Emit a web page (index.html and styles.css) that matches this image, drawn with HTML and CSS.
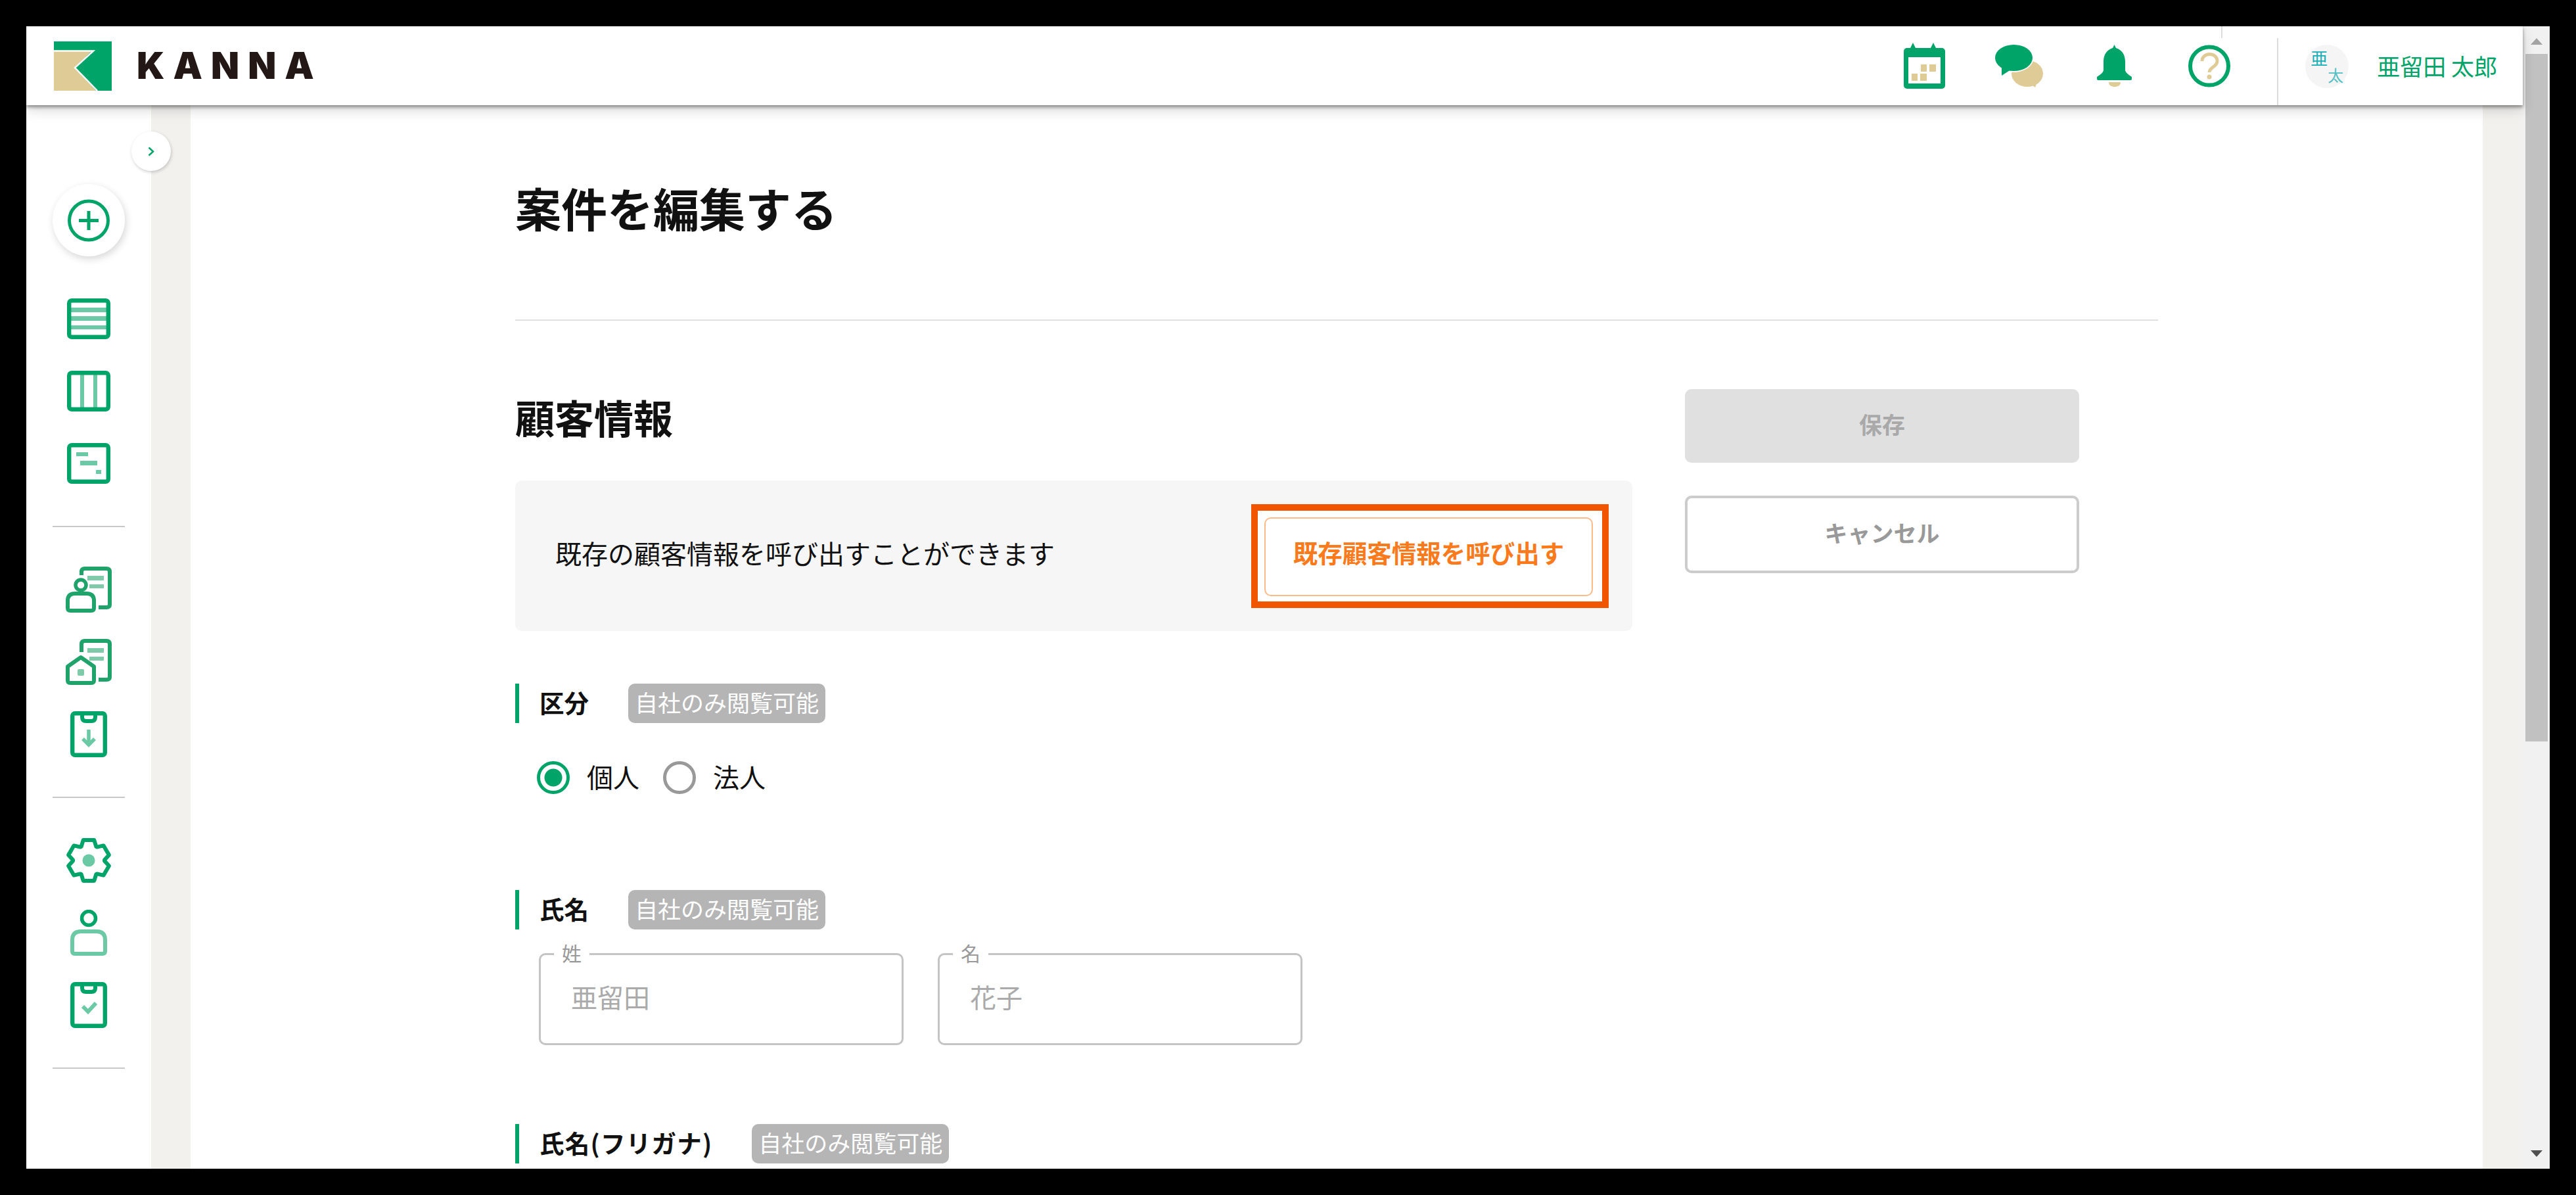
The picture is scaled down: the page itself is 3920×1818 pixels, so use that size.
FILE: index.html
```html
<!DOCTYPE html>
<html lang="ja">

<head>
    <title>KANNA - 案件を編集する</title>
    <link rel="stylesheet" href="styles.css">
</head>

<body>
    <div class="window">
        <div class="viewport">
            <header class="topbar">
                <span class="topbar-tick"></span>
                <div class="brand">
                    <svg class="brand-mark" viewBox="0 0 88 75">
                        <rect width="88" height="75" fill="#00a468" />
                        <path d="M0 15H57L31 40L64 75H0Z" fill="#dfcb96" />
                        <path d="M0 14.5H60L32 40L66 75" fill="none" stroke="#fff" stroke-width="2.5" />
                    </svg>
                    <span class="brand-name">KANNA</span>
                </div>
                <div class="topbar-right">
                    <a class="top-icon">
                        <svg width="63" height="70" viewBox="0 0 63 70">
                            <path d="M14 0L18 8H10ZM45 0L49 8H41Z" fill="#00a468" />
                            <rect y="8" width="63" height="62" rx="5" fill="#00a468" />
                            <rect x="7" y="22" width="49" height="40" fill="#fff" />
                            <path d="M26 33h9v11h-9zM39 33h10v11H39zM12 47h9v11h-9zM25 47h10v11H25z" fill="#dfcb96" />
                        </svg>
                    </a>
                    <a class="top-icon">
                        <svg width="73" height="65" viewBox="0 0 73 65">
                            <ellipse cx="49" cy="44" rx="24" ry="20" fill="#dfcb96" />
                            <path d="M52 58L61 65L66 52Z" fill="#dfcb96" />
                            <ellipse cx="28.5" cy="20" rx="30" ry="22" fill="#fff" />
                            <ellipse cx="28.5" cy="20" rx="28.5" ry="20" fill="#00a468" />
                            <path d="M10 33V47L24 38Z" fill="#00a468" />
                        </svg>
                    </a>
                    <a class="top-icon">
                        <svg width="53" height="64" viewBox="0 0 53 64">
                            <path d="M26.5 0L29 5C38 8 43 15 43 26V38C43 42 47 45 53 49V52Q53 54 50 54H3Q0 54 0 52V49C6 45 10 42 10 38V26C10 15 15 8 24 5Z" fill="#00a468" />
                            <path d="M18 57H36C36 62 32 64 27 64C22 64 18 62 18 57Z" fill="#dfcb96" />
                        </svg>
                    </a>
                    <a class="top-icon">
                        <svg width="64" height="65" viewBox="0 0 64 65">
                            <circle cx="32" cy="32.5" r="29" fill="none" stroke="#00a468" stroke-width="6" />
                            <path d="M21 25C21 11 44 11 44 25C44 34 32 34 32 42" fill="none" stroke="#dfcb96" stroke-width="5" />
                            <circle cx="32" cy="49" r="3.5" fill="#dfcb96" />
                        </svg>
                    </a>
                    <div class="account">
                        <div class="avatar">
                            <span class="avatar-sei">亜</span>
                            <span class="avatar-mei">太</span>
                        </div>
                        <span class="account-name">亜留田 太郎</span>
                    </div>
                </div>
            </header>

            <div class="app-body">
                <aside class="sidebar">
                    <button class="new-btn">
                        <svg width="64" height="65" viewBox="0 0 64 65">
                            <circle cx="32" cy="32.5" r="29.5" fill="none" stroke="#00a468" stroke-width="5" />
                            <path d="M17 32.5H47M32 18V47" fill="none" stroke="#00a468" stroke-width="5" />
                        </svg>
                    </button>

                    <nav class="nav-group">
                        <a class="nav-item">
                            <svg width="66" height="62" viewBox="0 0 66 62">
                                <path d="M6 14h54v7H6zM6 27h54v7H6zM6 41h54v6H6z" fill="#6cc9a5" />
                                <rect x="3.2" y="3.2" width="59.6" height="55.6" rx="4" fill="none" stroke="#00a468" stroke-width="6.4" />
                            </svg>
                        </a>
                        <a class="nav-item">
                            <svg width="66" height="62" viewBox="0 0 66 62">
                                <path d="M20 3h6v56h-6zM40 3h6v56h-6z" fill="#6cc9a5" />
                                <rect x="3.2" y="3.2" width="59.6" height="55.6" rx="4" fill="none" stroke="#00a468" stroke-width="6.4" />
                            </svg>
                        </a>
                        <a class="nav-item">
                            <svg width="66" height="62" viewBox="0 0 66 62">
                                <path d="M14 14h18v6H14zM20 27h26v7H20zM44 41h8v6h-8z" fill="#6cc9a5" />
                                <rect x="3.2" y="3.2" width="59.6" height="55.6" rx="4" fill="none" stroke="#00a468" stroke-width="6.4" />
                            </svg>
                        </a>
                    </nav>

                    <nav class="nav-group">
                        <a class="nav-item">
                            <svg width="70" height="70" viewBox="0 0 70 70">
                                <path d="M33 14h25v7H33zM36 27h22v6H36z" fill="#7fcaa8" />
                                <path d="M24 13V8Q24 3 29 3H62Q67 3 67 8V58Q67 62 62 62H50" fill="none" stroke="#1fa36a" stroke-width="6" />
                                <circle cx="23" cy="28" r="8" fill="none" stroke="#1fa36a" stroke-width="5.5" />
                                <path d="M14 41H32Q43 41 43 52V63Q43 67 39 67H7Q3 67 3 63V52Q3 41 14 41Z" fill="none" stroke="#1fa36a" stroke-width="6" />
                            </svg>
                        </a>
                        <a class="nav-item">
                            <svg width="70" height="70" viewBox="0 0 70 70">
                                <path d="M33 14h25v7H33zM36 27h22v6H36z" fill="#7fcaa8" />
                                <path d="M24 20V8Q24 3 29 3H62Q67 3 67 8V58Q67 62 62 62H50" fill="none" stroke="#1fa36a" stroke-width="6" />
                                <path d="M3 42L23 28L43 42V63Q43 67 39 67H7Q3 67 3 63Z" fill="#fff" stroke="#1fa36a" stroke-width="6" stroke-linejoin="round" />
                                <rect x="18" y="46" width="10" height="10" rx="2" fill="#7fcaa8" />
                            </svg>
                        </a>
                        <a class="nav-item">
                            <svg width="56" height="70" viewBox="0 0 56 70">
                                <rect x="3.2" y="3.2" width="49.6" height="63.6" rx="4" fill="none" stroke="#00a468" stroke-width="6.4" />
                                <path d="M18 3V9Q18 15 24 15H32Q38 15 38 9V3" fill="none" stroke="#00a468" stroke-width="6" />
                                <path d="M28 28V52M19 42L28 51L37 42" fill="none" stroke="#6cc9a5" stroke-width="5.5" />
                            </svg>
                        </a>
                    </nav>

                    <nav class="nav-group">
                        <a class="nav-item">
                            <svg width="70" height="70" viewBox="0 0 70 70">
                                <path d="M23.7 13.8L26.7 4.1H43.3L46.3 13.8L47.7 14.6L57.6 12.4L65.9 26.7L59 34.2V35.8L65.9 43.3L57.6 57.6L47.7 55.4L46.3 56.2L43.3 65.9H26.7L23.7 56.2L22.3 55.4L12.4 57.6L4.1 43.3L11 35.8V34.2L4.1 26.7L12.4 12.4L22.3 14.6Z" fill="none" stroke="#00a468" stroke-width="6" stroke-linejoin="round" />
                                <circle cx="35" cy="35" r="9.5" fill="#6cc9a5" />
                            </svg>
                        </a>
                        <a class="nav-item">
                            <svg width="56" height="70" viewBox="0 0 56 70">
                                <circle cx="28" cy="13" r="10.5" fill="none" stroke="#00a468" stroke-width="5.5" />
                                <path d="M16 33H40Q53 33 53 46V63Q53 67 49 67H7Q3 67 3 63V46Q3 33 16 33Z" fill="none" stroke="#6cc9a5" stroke-width="6" />
                            </svg>
                        </a>
                        <a class="nav-item">
                            <svg width="56" height="70" viewBox="0 0 56 70">
                                <rect x="3.2" y="3.2" width="49.6" height="63.6" rx="4" fill="none" stroke="#00a468" stroke-width="6.4" />
                                <path d="M18 3V9Q18 15 24 15H32Q38 15 38 9V3" fill="none" stroke="#00a468" stroke-width="6" />
                                <path d="M19 37L27 45L39 32" fill="none" stroke="#6cc9a5" stroke-width="6" />
                            </svg>
                        </a>
                    </nav>
                </aside>

                <button class="side-toggle">
                    <svg width="10" height="15" viewBox="0 0 10 15">
                        <path d="M1.5 1.5L8 7.5L1.5 13.5" fill="none" stroke="#00a468" stroke-width="2.5" />
                    </svg>
                </button>

                <div class="gutter"></div>

                <main class="main">
                    <h1 class="page-title">案件を編集する</h1>

                    <div class="columns">
                        <div class="form-col">
                            <h2 class="section-title">顧客情報</h2>

                            <div class="import-box">
                                <span class="import-text">既存の顧客情報を呼び出すことができます</span>
                                <div class="callout">
                                    <button class="import-btn">既存顧客情報を呼び出す</button>
                                </div>
                            </div>

                            <section class="field field-kind">
                                <div class="field-head">
                                    <span class="field-label">区分</span>
                                    <span class="badge">自社のみ閲覧可能</span>
                                </div>
                                <div class="radios">
                                    <label class="radio"><input type="radio" name="kind" checked>個人</label>
                                    <label class="radio"><input type="radio" name="kind">法人</label>
                                </div>
                            </section>

                            <section class="field field-name">
                                <div class="field-head">
                                    <span class="field-label">氏名</span>
                                    <span class="badge">自社のみ閲覧可能</span>
                                </div>
                                <div class="name-inputs">
                                    <div class="outlined">
                                        <span class="outlined-label">姓</span>
                                        <span class="outlined-value">亜留田</span>
                                    </div>
                                    <div class="outlined">
                                        <span class="outlined-label">名</span>
                                        <span class="outlined-value">花子</span>
                                    </div>
                                </div>
                            </section>

                            <section class="field field-kana">
                                <div class="field-head">
                                    <span class="field-label">氏名(フリガナ)</span>
                                    <span class="badge">自社のみ閲覧可能</span>
                                </div>
                            </section>
                        </div>

                        <div class="action-col">
                            <button class="btn btn-save">保存</button>
                            <button class="btn btn-cancel">キャンセル</button>
                        </div>
                    </div>
                </main>

                <div class="gutter gutter-right"></div>
            </div>
        </div>

        <div class="scrollbar">
            <span class="arrow-up"></span>
            <span class="thumb"></span>
            <span class="arrow-down"></span>
        </div>
    </div>
</body>

</html>
```

FILE: styles.css
```css
html,
body {
    margin: 0;
    height: 100%;
}

body {
    background: #000;
    padding: 40px;
    box-sizing: border-box;
    overflow: hidden;
    font-family: "Noto Sans CJK JP", "Noto Sans", sans-serif;
    color: #111;
}

button {
    font-family: inherit;
    padding: 0;
    cursor: pointer;
}

.window {
    display: flex;
    height: 1738px;
    background: #fff;
    overflow: hidden;
}

.viewport {
    flex: 1;
    min-width: 0;
    display: flex;
    flex-direction: column;
}

/* top bar */
.topbar {
    position: relative;
    z-index: 2;
    flex: none;
    height: 120px;
    display: flex;
    align-items: center;
    justify-content: space-between;
    padding: 0 39px 0 42px;
    background: #fff;
    box-shadow: 0 3px 5px rgba(0, 0, 0, .4), 0 8px 18px rgba(0, 0, 0, .15);
}

.topbar-tick {
    position: absolute;
    left: 3340px;
    top: 0;
    width: 2px;
    height: 18px;
    background: #ddd;
}

.brand {
    display: flex;
    align-items: center;
    gap: 38px;
}

.brand-mark {
    width: 88px;
    height: 75px;
}

.brand-name {
    font-family: Inter, "Liberation Sans", sans-serif;
    font-weight: 900;
    font-size: 56px;
    line-height: 1;
    letter-spacing: 13px;
    color: #231815;
}

.topbar-right {
    display: flex;
    align-items: center;
    align-self: stretch;
}

.top-icon {
    width: 144.5px;
    display: flex;
    justify-content: center;
}

.account {
    align-self: flex-end;
    height: 102px;
    margin-left: 31px;
    padding-left: 41px;
    padding-bottom: 16px;
    box-sizing: border-box;
    border-left: 2px solid #ddd;
    display: flex;
    align-items: center;
    gap: 43px;
}

.avatar {
    width: 66px;
    height: 66px;
    border-radius: 50%;
    background: #f5f5f5;
    display: grid;
    box-sizing: border-box;
    padding: 8px;
}

.avatar-sei {
    justify-self: start;
    font-size: 26px;
    line-height: 24px;
    color: #19adb5;
}

.avatar-mei {
    justify-self: end;
    align-self: end;
    font-size: 24px;
    line-height: 24px;
    color: #52c0c4;
}

.account-name {
    padding-bottom: 4px;
    font-size: 35px;
    line-height: 1;
    color: #00a468;
}

/* page below the top bar */
.app-body {
    position: relative;
    flex: 1;
    min-height: 0;
    display: flex;
}

.sidebar {
    flex: none;
    width: 190px;
    display: flex;
    flex-direction: column;
    align-items: center;
    padding-top: 120px;
}

.new-btn {
    flex: none;
    width: 110px;
    height: 110px;
    border: 0;
    border-radius: 50%;
    background: #fff;
    box-shadow: 2px 4px 12px rgba(0, 0, 0, .16);
    display: flex;
    align-items: center;
    justify-content: center;
}

.nav-group {
    width: 110px;
    padding: 40px 0;
    border-bottom: 2px solid #c8c8c8;
}

.nav-item {
    height: 110px;
    display: flex;
    align-items: center;
    justify-content: center;
}

.side-toggle {
    position: absolute;
    left: 160px;
    top: 40px;
    width: 60px;
    height: 60px;
    border: 0;
    border-radius: 50%;
    background: #fff;
    box-shadow: 1px 2px 5px rgba(0, 0, 0, .2);
    display: flex;
    align-items: center;
    justify-content: center;
}

.gutter {
    flex: none;
    width: 60px;
    background: #f2f1ee;
}

.gutter-right {
    width: 61px;
}

.main {
    flex: 1;
    min-width: 0;
    padding-left: 494px;
    box-sizing: border-box;
    overflow: hidden;
}

.page-title {
    width: 2500px;
    margin: 0;
    padding: 121px 0 135px;
    font-size: 70px;
    line-height: 70px;
    font-weight: 700;
    border-bottom: 2px solid #e0e0e0;
}

.columns {
    display: flex;
    gap: 80px;
    margin-top: 104px;
}

.form-col {
    width: 1700px;
    padding-top: 12px;
}

.section-title {
    margin: 0 0 67px;
    font-size: 60px;
    line-height: 60px;
    font-weight: 700;
}

.import-box {
    height: 229px;
    padding: 0 36px 0 61px;
    display: flex;
    align-items: center;
    justify-content: space-between;
    background: #f6f6f6;
    border-radius: 10px;
    font-size: 40px;
}

.import-text {
    padding-bottom: 10px;
}

.callout {
    width: 544px;
    height: 158px;
    box-sizing: border-box;
    padding: 10px 14px 8px 10px;
    border: 10px solid #f25500;
    background: #fff;
}

.import-btn {
    width: 100%;
    height: 100%;
    display: block;
    padding-bottom: 14px;
    background: #fff;
    border: 2px solid #fdbb8a;
    border-radius: 10px;
    color: #fb7a1c;
    font-size: 37.5px;
    font-weight: 700;
}

/* form fields */
.field-kind {
    margin-top: 80px;
}

.field-name {
    margin-top: 146px;
}

.field-kana {
    margin-top: 120px;
}

.field-head {
    height: 60px;
    display: flex;
    align-items: center;
    border-left: 6px solid #00a468;
    padding-left: 31px;
}

.field-label {
    padding-bottom: 5px;
    font-size: 37.5px;
    font-weight: 700;
    margin-right: 60px;
}

.field-kana .field-label {
    letter-spacing: 1.25px;
}

.badge {
    height: 60px;
    box-sizing: border-box;
    padding: 0 10px 5px;
    display: flex;
    align-items: center;
    background: #b5b5b5;
    border-radius: 10px;
    color: #fff;
    font-size: 35px;
}

.radios {
    display: flex;
    gap: 36px;
    margin-top: 58px;
    padding-left: 33px;
}

.radio {
    display: flex;
    align-items: flex-start;
    gap: 26px;
    font-size: 40px;
    line-height: 46px;
}

.radio input {
    appearance: none;
    width: 50px;
    height: 50px;
    margin: 0;
    border: 5px solid #999;
    border-radius: 50%;
    background: #fff;
}

.radio input:checked {
    border-color: #00a468;
    background: radial-gradient(circle, #00a468 0 13px, #fff 14px);
}

.name-inputs {
    display: flex;
    gap: 52px;
    margin-top: 36px;
    padding-left: 36px;
}

.outlined {
    position: relative;
    width: 555px;
    height: 140px;
    box-sizing: border-box;
    border: 3px solid #c4c4c4;
    border-radius: 10px;
    display: flex;
    align-items: center;
    padding-left: 46px;
}

.outlined-label {
    position: absolute;
    left: 20px;
    top: -19px;
    padding: 0 12px;
    background: #fff;
    color: #999;
    font-size: 30px;
    line-height: 30px;
}

.outlined-value {
    padding-bottom: 9px;
    color: #aaa;
    font-size: 40px;
}

.action-col {
    width: 600px;
    display: flex;
    flex-direction: column;
    gap: 50px;
}

.btn {
    border-radius: 10px;
    font-size: 35px;
    font-weight: 700;
    padding-bottom: 8px;
}

.btn-save {
    height: 112px;
    border: 0;
    background: #e0e0e0;
    color: #a9a9a9;
}

.btn-cancel {
    height: 118px;
    background: #fff;
    border: 4px solid #ccc;
    color: #999;
}

/* browser scrollbar */
.scrollbar {
    flex: none;
    width: 41px;
    background: #f1f1f1;
    display: flex;
    flex-direction: column;
    align-items: center;
}

.arrow-up {
    margin-top: 18px;
    border: solid transparent;
    border-width: 0 9px 10px;
    border-bottom-color: #a3a3a3;
}

.thumb {
    flex: none;
    width: 34px;
    height: 1046px;
    margin-top: 14px;
    background: #c1c1c1;
}

.arrow-down {
    margin-top: auto;
    margin-bottom: 18px;
    border: solid transparent;
    border-width: 10px 9px 0;
    border-top-color: #505050;
}
```
